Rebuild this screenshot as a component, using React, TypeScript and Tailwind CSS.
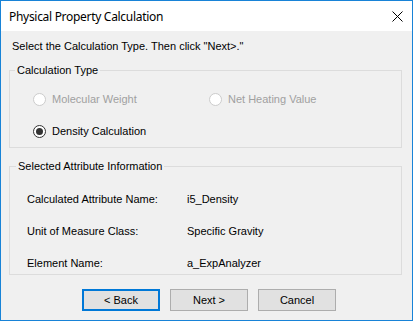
const SANS = "font-['Liberation_Sans',Arial,sans-serif]";

function Radio({
  label,
  checked = false,
  disabled = false,
}: {
  label: string;
  checked?: boolean;
  disabled?: boolean;
}) {
  return (
    <div className="flex items-center gap-[6px] h-[14px]">
      <span
        className={`w-[13px] h-[13px] rounded-full border flex items-center justify-center bg-white ${
          disabled ? "border-[#cccccc]" : "border-[#333333]"
        }`}
      >
        {checked && <span className="w-[7px] h-[7px] rounded-full bg-[#333333]" />}
      </span>
      <span className={disabled ? "text-[#a0a0a0]" : "text-black"}>{label}</span>
    </div>
  );
}

function InfoRow({ name, value }: { name: string; value: string }) {
  return (
    <div className="flex h-[14px] items-center">
      <span className="w-[160px]">{name}</span>
      <span>{value}</span>
    </div>
  );
}

function Button({ label, primary = false }: { label: string; primary?: boolean }) {
  return (
    <button
      className={`w-[78px] h-[22px] bg-[#e1e1e1] flex items-center justify-center ${
        primary ? "border-2 border-[#0078d7]" : "border border-[#adadad]"
      }`}
    >
      {label}
    </button>
  );
}

export default function App() {
  return (
    <div
      className={`w-[413px] h-[321px] border border-[#1883d7] flex flex-col text-[11px] leading-[13px] text-black ${SANS}`}
    >
      {/* TITLE BAR */}
      <div className="h-[30px] bg-white flex items-center justify-between pl-[8px] pr-[9px]">
        <span className="text-[12px] tracking-[-0.3px] font-['Noto_Sans',sans-serif] text-black">
          Physical Property Calculation
        </span>
        <svg width="11" height="11" viewBox="0 0 11 11" className="mt-[1px]">
          <path d="M0.5 0.5 L10.5 10.5 M10.5 0.5 L0.5 10.5" stroke="#000" strokeWidth="1" />
        </svg>
      </div>

      {/* BODY */}
      <div className="flex-1 bg-[#f0f0f0] pl-[8px] pr-[10px] flex flex-col">
        <div className="pl-[3px] mt-[9px]">
          Select the Calculation Type. Then click "Next&gt;."
        </div>

        <fieldset className="mt-[11px] h-[84px] border border-[#dcdcdc] pl-[5px] pr-0">
          <legend className="px-[2px]">Calculation Type</legend>
          <div className="pl-[18px] pt-[15px] flex flex-col gap-[18px]">
            <div className="flex">
              <div className="w-[176px]">
                <Radio label="Molecular Weight" disabled />
              </div>
              <Radio label="Net Heating Value" disabled />
            </div>
            <Radio label="Density Calculation" checked />
          </div>
        </fieldset>

        <fieldset className="mt-[12px] h-[115px] border border-[#dcdcdc] pl-[6px] pr-0">
          <legend className="px-[2px]">Selected Attribute Information</legend>
          <div className="pl-[11px] pt-[19px] flex flex-col gap-[18px]">
            <InfoRow name="Calculated Attribute Name:" value="i5_Density" />
            <InfoRow name="Unit of Measure Class:" value="Specific Gravity" />
            <InfoRow name="Element Name:" value="a_ExpAnalyzer" />
          </div>
        </fieldset>

        {/* ACTION BUTTONS */}
        <div className="flex gap-[10px] mt-[14px] pl-[73px]">
          <Button label="< Back" primary />
          <Button label="Next >" />
          <Button label="Cancel" />
        </div>
      </div>
    </div>
  );
}
